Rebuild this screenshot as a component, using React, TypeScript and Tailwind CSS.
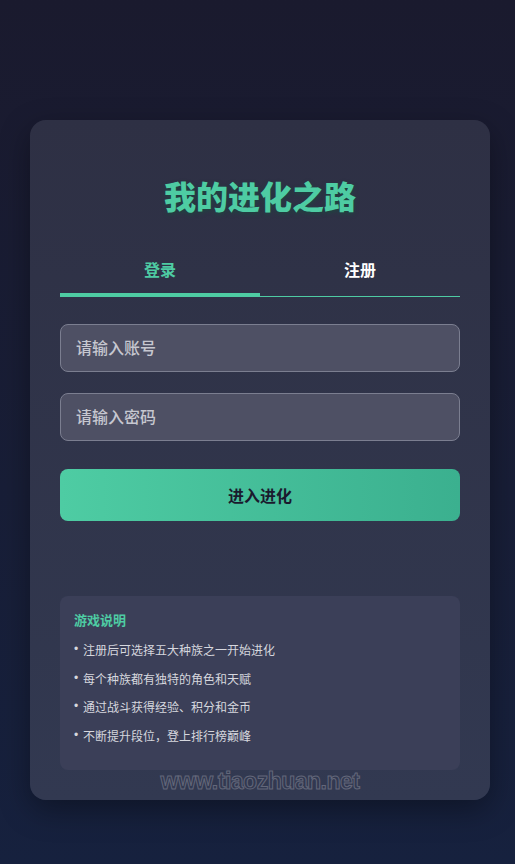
import { useState } from "react";

const rules = [
  "注册后可选择五大种族之一开始进化",
  "每个种族都有独特的角色和天赋",
  "通过战斗获得经验、积分和金币",
  "不断提升段位，登上排行榜巅峰",
];

export default function App() {
  const [tab, setTab] = useState<"login" | "register">("login");

  return (
    <div className="min-h-screen bg-gradient-to-b from-[#1a1a2e] to-[#16213e] pl-[30px] pt-[120px] pb-[64px] font-['Noto_Sans_CJK_SC','Noto_Sans',sans-serif]">
      <div className="relative w-[460px] rounded-2xl bg-gradient-to-b from-[#2e3044] to-[#323951] px-[30px] pt-[55px] pb-[30px] shadow-[0_10px_30px_rgba(0,0,0,0.35)]">
        <h1 className="text-center text-[32px] leading-[40px] font-black text-[#4ecca3] [text-shadow:0_2px_4px_rgba(20,80,60,0.6)]">
          我的进化之路
        </h1>

        <div className="mt-[31px] flex border-b border-[#4ecca3]">
          <button
            onClick={() => setTab("login")}
            className={`flex-1 pt-[11px] pb-[12px] text-[16px] leading-[24px] font-bold border-b-[3px] ${
              tab === "login" ? "text-[#4ecca3] border-[#4ecca3]" : "text-white border-transparent"
            }`}
          >
            登录
          </button>
          <button
            onClick={() => setTab("register")}
            className={`flex-1 pt-[11px] pb-[12px] text-[16px] leading-[24px] font-bold border-b-[3px] ${
              tab === "register" ? "text-[#4ecca3] border-[#4ecca3]" : "text-white border-transparent"
            }`}
          >
            注册
          </button>
        </div>

        <form className="mt-[27px] flex flex-col" onSubmit={(e) => e.preventDefault()}>
          <input
            type="text"
            placeholder="请输入账号"
            className="h-[48px] rounded-lg border border-[#7b7e90] bg-[#4e5064] px-[15px] pb-[2px] text-[16px] font-medium text-white placeholder:text-[#c6c7d0] outline-none"
          />
          <input
            type="password"
            placeholder="请输入密码"
            className="mt-[21px] h-[48px] rounded-lg border border-[#7b7e90] bg-[#4e5064] px-[15px] pb-[2px] text-[16px] font-medium text-white placeholder:text-[#c6c7d0] outline-none"
          />
          <button
            type="submit"
            className="mt-[28px] h-[52px] rounded-lg bg-gradient-to-r from-[#4ecca3] to-[#3bb08f] text-[16px] font-bold text-[#1a1a2e]"
          >
            进入进化
          </button>
        </form>

        <div className="mt-[75px] rounded-lg bg-[#3b3f58] px-[14px] pt-[14px] pb-[25px]">
          <h3 className="text-[13px] leading-[20px] font-bold text-[#4ecca3]">游戏说明</h3>
          <ul className="mt-[10px] flex flex-col gap-[9.6px]">
            {rules.map((r) => (
              <li key={r} className="flex text-[12px] leading-[19px] text-[#d6d7de]">
                <span className="w-[9px] font-['Liberation_Sans',sans-serif]">•</span>
                <span>{r}</span>
              </li>
            ))}
          </ul>
        </div>

        <div className="pointer-events-none absolute left-0 right-0 bottom-[6px] text-center text-[23px] leading-[26px] font-bold tracking-[-0.5px] text-transparent [-webkit-text-stroke:1px_#63677a] font-['Liberation_Sans',sans-serif]">
          www.tiaozhuan.net
        </div>
      </div>
    </div>
  );
}
